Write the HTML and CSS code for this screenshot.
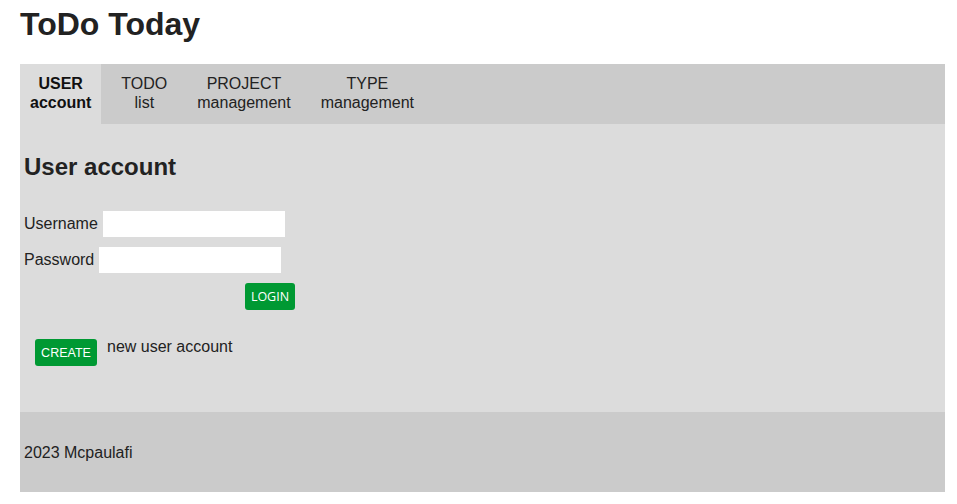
FILE: index.html
```html
<!DOCTYPE html>
<html lang="en">
<head>
<meta charset="utf-8">
<title>ToDo Today</title>
<link rel="stylesheet" href="styles.css">
</head>
<body>
<div class="page">
  <h1 class="title">ToDo Today</h1>
  <nav class="nav">
    <a class="tab active">USER<br>account</a>
    <a class="tab">TODO<br>list</a>
    <a class="tab">PROJECT<br>management</a>
    <a class="tab">TYPE<br>management</a>
  </nav>
  <main class="content">
    <h2 class="heading">User account</h2>
    <form class="login">
      <div class="row"><label>Username</label><input class="field" type="text"></div>
      <div class="row"><label>Password</label><input class="field" type="password"></div>
      <div class="row end"><button class="btn btn-login" type="button">LOGIN</button></div>
    </form>
    <div class="create">
      <button class="btn btn-create" type="button">CREATE</button>
      <span class="create-text">new user account</span>
    </div>
  </main>
  <footer class="footer">2023 Mcpaulafi</footer>
</div>
</body>
</html>
```
FILE: styles.css
```css
* { box-sizing: border-box; }
body {
  margin: 0;
  background: #ffffff;
  font-family: "Liberation Sans", Arial, sans-serif;
  color: #222222;
  font-size: 16px;
}
.page {
  margin: 0 12px 0 20px;
}
.title {
  font-size: 32px;
  font-weight: bold;
  margin: 6px 0 21px 0;
  line-height: 36.8px;
}
.nav {
  display: flex;
  gap: 10px;
  height: 60px;
  background: #cbcbcb;
}
.tab {
  padding: 10px 10px 12px 10px;
  line-height: 19px;
  text-align: center;
  color: #222222;
}
.tab.active {
  background: #dcdcdc;
  font-weight: bold;
  color: #111111;
}
.content {
  background: #dcdcdc;
  padding: 9px 4px 46px 4px;
}
.heading {
  font-size: 24px;
  font-weight: bold;
  margin: 20px 0 31px 0;
  line-height: 27.6px;
}
.login {
  width: 271px;
  display: flex;
  flex-direction: column;
  gap: 10px;
}
.row {
  display: flex;
  align-items: center;
  gap: 5px;
  height: 26px;
}
.row.end {
  justify-content: flex-end;
  height: 27px;
}
.field {
  width: 182px;
  height: 26px;
  border: none;
  background: #ffffff;
  margin: 0;
  padding: 2px 4px;
}
.btn {
  background: #009933;
  color: #ffffff;
  border: none;
  border-radius: 3px;
  height: 27px;
  padding: 0 4px;
  margin: 0;
}
.btn-login {
  font-family: "Open Sans", sans-serif;
  font-size: 12.5px;
  width: 50px;
}
.btn-create {
  font-family: "Liberation Sans", Arial, sans-serif;
  font-size: 12.5px;
  width: 62px;
}
.create {
  display: flex;
  align-items: flex-start;
  margin-top: 29px;
  padding-left: 11px;
  gap: 10px;
}
.create-text {
  line-height: 18px;
  margin-top: -1px;
}
.footer {
  background: #cbcbcb;
  height: 80px;
  padding: 32px 4px 0 4px;
  line-height: 18.4px;
}
```
